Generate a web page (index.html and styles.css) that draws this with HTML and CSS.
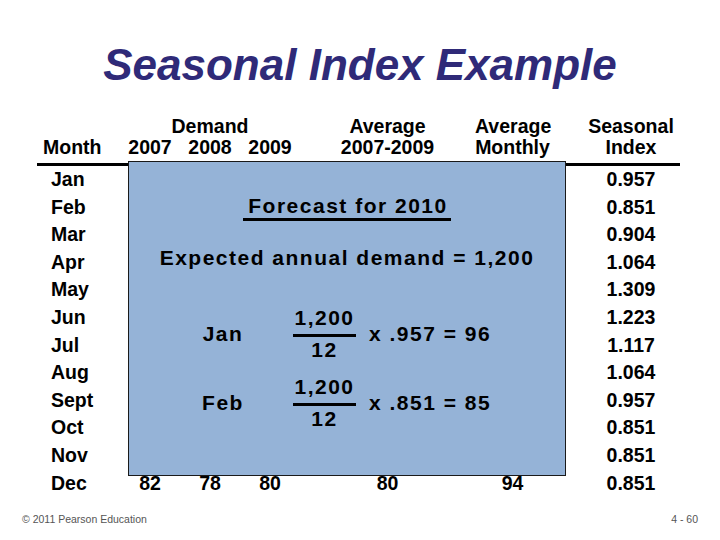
FILE: index.html
```html
<!DOCTYPE html>
<html>
<head>
<meta charset="utf-8">
<link rel="stylesheet" href="styles.css">
</head>
<body>
<div class="slide">
  <h1 class="title">Seasonal Index Example</h1>
  <div class="table">
    <div class="head">
      <div class="h-month">Month</div>
      <div class="h-demand">Demand</div>
      <div class="c2 r2">2007</div>
      <div class="c3 r2">2008</div>
      <div class="c4 r2">2009</div>
      <div class="c5 two">Average<br>2007-2009</div>
      <div class="c6 two">Average<br>Monthly</div>
      <div class="c7 two">Seasonal<br>Index</div>
    </div>
    <div class="row"><span class="m">Jan</span><span class="idx">0.957</span></div>
    <div class="row"><span class="m">Feb</span><span class="idx">0.851</span></div>
    <div class="row"><span class="m">Mar</span><span class="idx">0.904</span></div>
    <div class="row"><span class="m">Apr</span><span class="idx">1.064</span></div>
    <div class="row"><span class="m">May</span><span class="idx">1.309</span></div>
    <div class="row"><span class="m">Jun</span><span class="idx">1.223</span></div>
    <div class="row"><span class="m">Jul</span><span class="idx">1.117</span></div>
    <div class="row"><span class="m">Aug</span><span class="idx">1.064</span></div>
    <div class="row"><span class="m">Sept</span><span class="idx">0.957</span></div>
    <div class="row"><span class="m">Oct</span><span class="idx">0.851</span></div>
    <div class="row"><span class="m">Nov</span><span class="idx">0.851</span></div>
    <div class="row"><span class="m">Dec</span><span class="c2">82</span><span class="c3">78</span><span class="c4">80</span><span class="c5">80</span><span class="c6">94</span><span class="idx">0.851</span></div>

    <div class="box">
      <div class="fc"><span class="fc-text">Forecast for 2010</span></div>
      <div class="exp">Expected annual demand = 1,200</div>
      <div class="calcs">
        <div class="calc">
          <span class="lab">Jan</span>
          <span class="frac"><span class="num">1,200</span><span class="bar"></span><span class="den">12</span></span>
          <span class="expr">x .957 = 96</span>
        </div>
        <div class="calc">
          <span class="lab">Feb</span>
          <span class="frac"><span class="num">1,200</span><span class="bar"></span><span class="den">12</span></span>
          <span class="expr">x .851 = 85</span>
        </div>
      </div>
    </div>
  </div>
  <footer class="foot">
    <span>© 2011 Pearson Education</span>
    <span>4 - 60</span>
  </footer>
</div>
</body>
</html>
```
FILE: styles.css
```css
html, body {
  margin: 0;
  padding: 0;
  background: #fff;
}
.slide {
  width: 720px;
  height: 540px;
  overflow: hidden;
  font-family: "Liberation Sans", Arial, sans-serif;
  color: #000;
}
.title {
  margin: 0;
  padding-top: 40px;
  height: 50px;
  line-height: 50px;
  font-size: 44px;
  font-weight: bold;
  font-style: italic;
  color: #2f2a78;
  text-align: center;
}
.table {
  position: relative;
  margin-top: 26px;
  margin-left: 37px;
  width: 643px;
  font-weight: bold;
  font-size: 19.5px;
}
.head, .row {
  display: grid;
  grid-template-columns: 83px 60px 60px 60px 175px 75px 130px;
}
.head {
  grid-template-rows: 21px 21px;
  line-height: 21px;
  padding-bottom: 5px;
  border-bottom: 3px solid #000;
  text-align: center;
}
.h-month {
  grid-column: 1;
  grid-row: 2;
  text-align: left;
  padding-left: 6px;
}
.h-demand {
  grid-column: 2 / 5;
  grid-row: 1;
}
.r2 { grid-row: 2; }
.two { grid-row: 1 / 3; }
.c2 { grid-column: 2; }
.c3 { grid-column: 3; }
.c4 { grid-column: 4; }
.c5 { grid-column: 5; }
.c6 { grid-column: 6; }
.c7 { grid-column: 7; padding-left: 32px; }
.row {
  line-height: 27.6px;
  text-align: center;
}
.row .m {
  grid-column: 1;
  text-align: left;
  padding-left: 14px;
}
.row .idx {
  grid-column: 7;
  padding-left: 32px;
}
.box {
  position: absolute;
  left: 91px;
  top: 45px;
  width: 438px;
  height: 315px;
  box-sizing: border-box;
  background: #95b3d7;
  border: 1px solid #1a1a1a;
  font-size: 21px;
  letter-spacing: 1.5px;
  padding-top: 32px;
  display: flex;
  flex-direction: column;
}
.fc {
  text-align: center;
  line-height: 24px;
}
.fc-text {
  display: inline-block;
  border-bottom: 3px solid #000;
  padding: 0 3px 0 5px;
}
.exp {
  margin-top: 25px;
  text-align: center;
  line-height: 24px;
}
.calcs {
  margin-top: 37px;
  display: flex;
  flex-direction: column;
  gap: 15px;
}
.calc {
  display: flex;
  align-items: center;
  padding-left: 54px;
}
.lab {
  width: 80px;
  text-align: center;
}
.frac {
  margin-left: 30px;
  width: 63px;
  display: flex;
  flex-direction: column;
  align-items: center;
  line-height: 22px;
}
.bar {
  align-self: stretch;
  height: 3px;
  background: #000;
  margin: 5px 0 2px;
}
.expr {
  margin-left: 13px;
}
.foot {
  margin-top: 15px;
  display: flex;
  justify-content: space-between;
  padding: 0 22px;
  line-height: 14px;
  font-size: 10.5px;
  color: #555;
}
```
